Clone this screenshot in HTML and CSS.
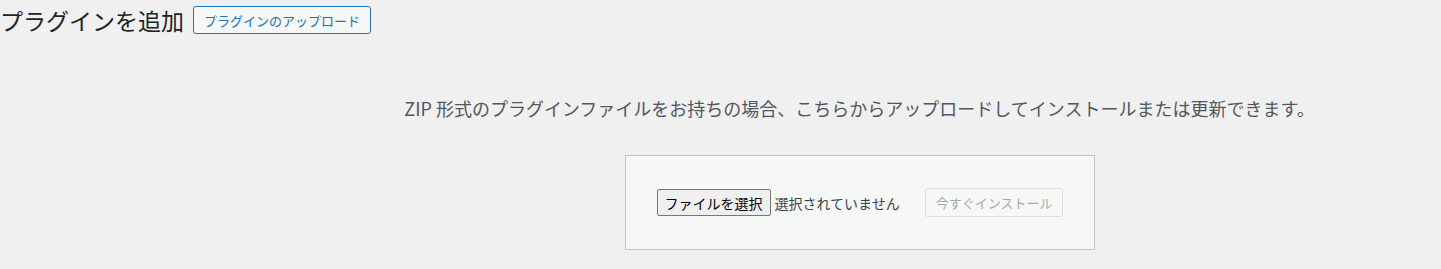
FILE: index.html
```html
<!DOCTYPE html>
<html lang="ja">
<head>
<meta charset="utf-8">
<title>プラグインを追加</title>
<link rel="stylesheet" href="styles.css">
</head>
<body>
<div class="wrap">
  <div class="title-row">
    <h1 class="page-title">プラグインを追加</h1>
    <a class="page-title-action" href="#">プラグインのアップロード</a>
  </div>
  <div class="upload-plugin">
    <p class="install-help">ZIP 形式のプラグインファイルをお持ちの場合、こちらからアップロードしてインストールまたは更新できます。</p>
    <form class="upload-form">
      <span class="file-input">
        <span class="file-button">ファイルを選択</span>
        <span class="file-status">選択されていません</span>
      </span>
      <button type="button" class="install-button" disabled>今すぐインストール</button>
    </form>
  </div>
</div>
</body>
</html>
```

FILE: styles.css
```css
html, body {
  margin: 0;
  padding: 0;
  background: #f0f0f1;
}
body {
  font-family: "Noto Sans CJK JP", "Noto Sans", sans-serif;
  color: #3c434a;
  font-size: 13px;
}
.wrap {
  width: 1441px;
  height: 269px;
  overflow: hidden;
}
.title-row {
  display: flex;
  align-items: center;
  gap: 9px;
  padding-top: 6px;
}
.page-title {
  margin: 0;
  font-size: 23px;
  font-weight: 400;
  line-height: 28px;
  color: #1d2327;
}
.page-title-action {
  display: inline-flex;
  align-items: center;
  box-sizing: border-box;
  height: 28px;
  padding: 0 10px;
  border: 1px solid #2271b1;
  border-radius: 3px;
  background: #f6f7f7;
  color: #2271b1;
  font-size: 13px;
  text-decoration: none;
}
.upload-plugin {
  margin-left: 278px;
  text-align: center;
}
.install-help {
  margin: 0;
  padding-top: 61px;
  font-size: 18px;
  line-height: 27px;
  color: #50575e;
}
.upload-form {
  display: inline-flex;
  align-items: center;
  gap: 25px;
  box-sizing: border-box;
  height: 95px;
  margin-top: 33px;
  padding: 0 30px 0 31px;
  width: 470px;
  background: #f6f7f7;
  border: 1px solid #c3c4c7;
}
.file-input {
  display: inline-flex;
  align-items: center;
  gap: 4px;
  color: #3c434a;
}
.file-button {
  display: inline-flex;
  align-items: center;
  box-sizing: border-box;
  height: 27px;
  padding: 0 7px;
  background: #efefef;
  border: 1px solid #767676;
  border-radius: 2px;
  color: #000;
  font-size: 14px;
}
.file-status {
  font-size: 14px;
  color: #3c434a;
}
.install-button {
  box-sizing: border-box;
  height: 29px;
  padding: 0 10px;
  background: #f6f7f7;
  border: 1px solid #dcdcde;
  border-radius: 3px;
  color: #a7aaad;
  font-family: inherit;
  font-size: 13px;
}
```
